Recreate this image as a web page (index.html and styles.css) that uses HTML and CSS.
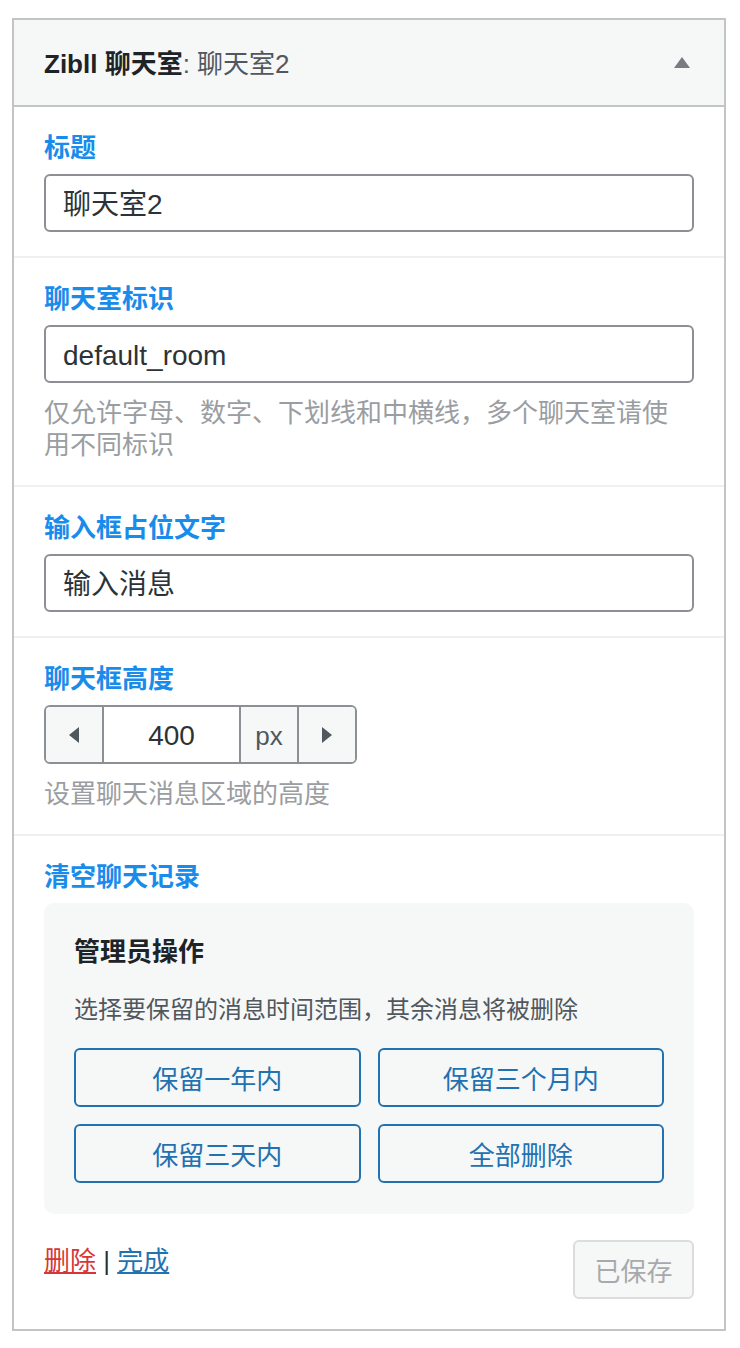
FILE: index.html
```html
<!DOCTYPE html>
<html lang="zh-CN">
<head>
<meta charset="utf-8">
<title>Zibll 聊天室</title>
<link rel="stylesheet" href="styles.css">
</head>
<body>
<div class="widget">
  <div class="widget-top">
    <h3 class="widget-title"><strong>Zibll 聊天室</strong><span class="in-title">: 聊天室2</span></h3>
    <span class="toggle-arrow"></span>
  </div>
  <div class="widget-inside">
    <div class="field">
      <label class="field-label">标题</label>
      <div class="text-input">聊天室2</div>
    </div>
    <div class="field">
      <label class="field-label">聊天室标识</label>
      <div class="text-input">default_room</div>
      <p class="desc">仅允许字母、数字、下划线和中横线，多个聊天室请使用不同标识</p>
    </div>
    <div class="field">
      <label class="field-label">输入框占位文字</label>
      <div class="text-input">输入消息</div>
    </div>
    <div class="field">
      <label class="field-label">聊天框高度</label>
      <div class="spinner">
        <span class="spin-btn"><span class="tri tri-left"></span></span>
        <span class="spin-value">400</span>
        <span class="spin-unit">px</span>
        <span class="spin-btn last"><span class="tri tri-right"></span></span>
      </div>
      <p class="desc">设置聊天消息区域的高度</p>
    </div>
    <div class="field last-field">
      <label class="field-label">清空聊天记录</label>
      <div class="admin-box">
        <div class="admin-title">管理员操作</div>
        <p class="admin-desc">选择要保留的消息时间范围，其余消息将被删除</p>
        <div class="admin-grid">
          <button class="admin-btn">保留一年内</button>
          <button class="admin-btn">保留三个月内</button>
          <button class="admin-btn">保留三天内</button>
          <button class="admin-btn">全部删除</button>
        </div>
      </div>
      <div class="widget-footer">
        <div class="footer-links"><a class="link-delete" href="#">删除</a><span class="sep"> | </span><a class="link-done" href="#">完成</a></div>
        <button class="save-btn" disabled>已保存</button>
      </div>
    </div>
  </div>
</div>
</body>
</html>
```

FILE: styles.css
```css
* { box-sizing: border-box; }
html, body { margin: 0; padding: 0; background: #ffffff; }
body {
  font-family: "Liberation Sans", "Noto Sans CJK SC", sans-serif;
  color: #2c3338;
  font-size: 26px;
}
.widget {
  margin: 18px 0 0 12px;
  width: 714px;
  border: 2px solid #c3c4c7;
  background: #fff;
}
.widget-top {
  height: 87px;
  background: #f6f7f7;
  border-bottom: 2px solid #c3c4c7;
  display: flex;
  align-items: center;
  justify-content: space-between;
  padding: 0 34px 0 30px;
}
.widget-title {
  margin: 0;
  font-size: 26px;
  line-height: 36px;
  padding-top: 2px;
  color: #1d2327;
  font-weight: normal;
}
.widget-title strong { font-weight: 700; }
.in-title { color: #50575e; }
.toggle-arrow {
  width: 0; height: 0;
  border-left: 8px solid transparent;
  border-right: 8px solid transparent;
  border-bottom: 11px solid #787c82;
}
.field {
  padding: 23px 30px 24px;
  border-bottom: 2px solid #f0f0f1;
}
.field.last-field { border-bottom: 0; padding-bottom: 30px; }
.field-label {
  display: block;
  font-size: 26px;
  line-height: 36px;
  font-weight: 700;
  color: #198ceb;
  margin-bottom: 8px;
}
.text-input {
  height: 58px;
  border: 2px solid #8c8f94;
  border-radius: 6px;
  padding: 3px 17px 0;
  font-size: 28px;
  line-height: 51px;
  color: #2c3338;
  background: #fff;
}
.desc {
  margin: 14px 0 0;
  max-width: 640px;
  font-size: 26px;
  line-height: 32px;
  color: #9a9da1;
}
.spinner {
  display: flex;
  width: 313px;
  height: 59px;
  border: 2px solid #8c8f94;
  border-radius: 6px;
  overflow: hidden;
}
.spin-btn {
  width: 58px;
  background: #f6f7f7;
  border-right: 2px solid #8c8f94;
  display: flex;
  align-items: center;
  justify-content: center;
}
.spin-btn.last { border-right: 0; width: 56px; }
.spin-value {
  width: 137px;
  background: #fff;
  border-right: 2px solid #8c8f94;
  display: flex;
  align-items: center;
  justify-content: center;
  padding-top: 3px;
  font-size: 28px;
  color: #2c3338;
}
.spin-unit {
  width: 58px;
  background: #f6f7f7;
  border-right: 2px solid #8c8f94;
  display: flex;
  align-items: center;
  justify-content: center;
  padding-top: 3px;
  font-size: 26px;
  color: #50575e;
}
.tri { width: 0; height: 0; border-top: 8px solid transparent; border-bottom: 8px solid transparent; }
.tri-left { border-right: 10px solid #50575e; }
.tri-right { border-left: 10px solid #50575e; }
.admin-box {
  background: #f6f7f7;
  border-radius: 10px;
  padding: 31px 30px 31px;
}
.admin-title {
  font-size: 26px;
  line-height: 36px;
  font-weight: 700;
  color: #1d2327;
}
.admin-desc {
  margin: 24px 0 22px;
  font-size: 24px;
  line-height: 32px;
  color: #50575e;
}
.admin-grid {
  display: grid;
  grid-template-columns: 1fr 1fr;
  gap: 17px;
}
.admin-btn {
  height: 59px;
  border: 2px solid #2271b1;
  border-radius: 6px;
  background: #f6f7f7;
  color: #2271b1;
  font-family: inherit;
  font-size: 26px;
  padding: 0;
}
.widget-footer {
  margin-top: 26px;
  display: flex;
  justify-content: space-between;
  align-items: flex-start;
}
.footer-links {
  padding-top: 3px;
  font-size: 26px;
  line-height: 36px;
}
.link-delete { color: #d63638; text-decoration: underline; }
.link-done { color: #2271b1; text-decoration: underline; }
.sep { color: #2c3338; }
.save-btn {
  width: 121px;
  height: 59px;
  border: 2px solid #dcdcde;
  border-radius: 6px;
  background: #f6f7f7;
  color: #a7aaad;
  font-family: inherit;
  font-size: 26px;
  padding: 0;
}
```
